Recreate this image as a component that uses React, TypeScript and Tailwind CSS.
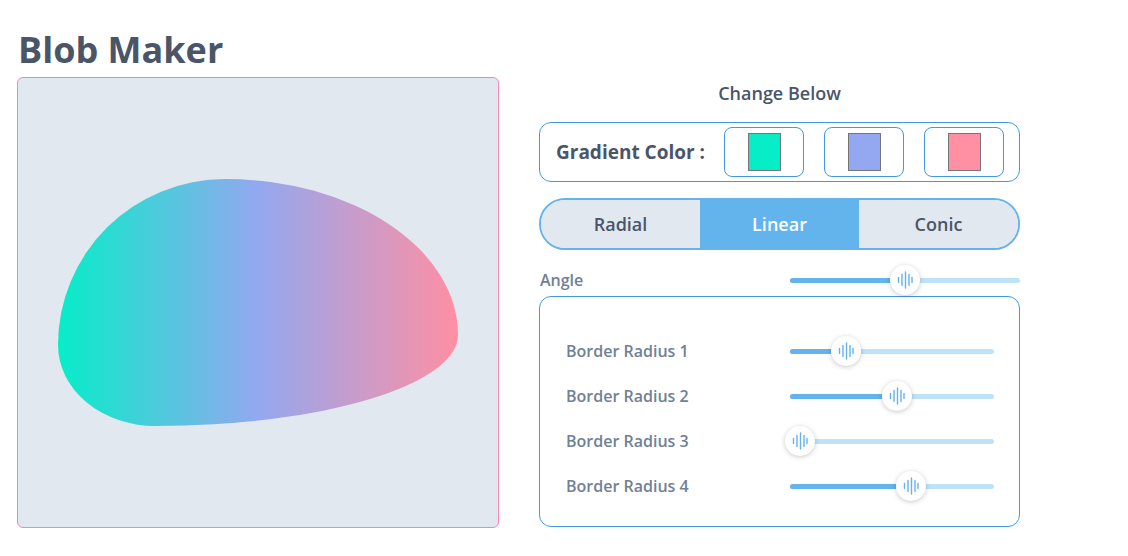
import React from "react";

function Thumb() {
  return (
    <div className="absolute top-1/2 w-[30px] h-[30px] -translate-x-1/2 -translate-y-1/2 rounded-full bg-white shadow-[0_1px_5px_rgba(0,0,0,0.22)] flex items-center justify-center">
      <svg width="16" height="18" viewBox="0 0 16 18">
        <g stroke="#63b3ed" strokeWidth="1.4" strokeLinecap="round">
          <line x1="1.5" y1="6.5" x2="1.5" y2="11.5" />
          <line x1="5" y1="3.5" x2="5" y2="14.5" />
          <line x1="8.5" y1="1" x2="8.5" y2="17" />
          <line x1="12" y1="3.5" x2="12" y2="14.5" />
          <line x1="15" y1="6.5" x2="15" y2="11.5" />
        </g>
      </svg>
    </div>
  );
}

function Slider({ width, pos }: { width: number; pos: number }) {
  return (
    <div className="relative h-[5px] rounded-full bg-[#bee3f8]" style={{ width }}>
      <div className="absolute left-0 top-0 h-full rounded-full bg-[#63b3ed]" style={{ width: pos }} />
      <div className="absolute inset-y-0" style={{ left: pos }}>
        <Thumb />
      </div>
    </div>
  );
}

function Swatch({ color }: { color: string }) {
  return (
    <div className="w-[80px] h-[50px] border border-[#4299e1] rounded-[8px] flex items-center justify-center">
      <div className="w-[33px] h-[38px] border border-[#767676]" style={{ background: color }} />
    </div>
  );
}

export default function App() {
  const rows: [string, number][] = [
    ["Border Radius 1", 56],
    ["Border Radius 2", 107],
    ["Border Radius 3", 10],
    ["Border Radius 4", 121],
  ];
  return (
    <div className="w-[1128px] h-[556px] bg-white font-['Open_Sans',sans-serif] overflow-hidden">
      <h1 className="pl-[18px] pt-[30px] mb-[7px] text-[36px] leading-[40px] font-bold text-[#4a5568]">
        Blob Maker
      </h1>
      <div className="flex pl-[17px] gap-[40px]">
        <div className="w-[482px] h-[451px] bg-[#e2e8f0] border border-[#f687b3] rounded-[6px] flex items-center justify-center">
          <div className="w-[400px] h-[247px] bg-[linear-gradient(to_right,#06edc8,#93a8f0,#ff8fa3)] rounded-[167px_233px_303px_97px/166px_156px_91px_81px]" />
        </div>
        <div className="w-[481px] flex flex-col">
          <div className="h-[32px] leading-[32px] text-center text-[18px] font-semibold text-[#4a5568]">
            Change Below
          </div>
          <div className="mt-[13px] h-[60px] border border-[#4299e1] rounded-[12px] flex items-center pl-[16px] pr-[15px]">
            <span className="text-[19px] font-bold text-[#4a5568]">Gradient Color :</span>
            <div className="ml-auto flex gap-[20px]">
              <Swatch color="#06edc8" />
              <Swatch color="#93a8f0" />
              <Swatch color="#ff8fa3" />
            </div>
          </div>
          <div className="mt-[16px] h-[52px] border-2 border-[#63b3ed] rounded-full overflow-hidden flex text-[18px] font-semibold">
            <div className="flex-1 bg-[#e2e8f0] text-[#4a5568] flex items-center justify-center">Radial</div>
            <div className="flex-1 bg-[#63b3ed] text-white flex items-center justify-center">Linear</div>
            <div className="flex-1 bg-[#e2e8f0] text-[#4a5568] flex items-center justify-center">Conic</div>
          </div>
          <div className="mt-[15px] h-[30px] flex items-center">
            <span className="pl-[1px] w-[251px] text-[16px] font-semibold text-[#718096]">Angle</span>
            <Slider width={230} pos={115} />
          </div>
          <div className="mt-[1px] h-[231px] border border-[#4299e1] rounded-[12px] pt-[31.5px] pl-[26px]">
            {rows.map(([label, pos]) => (
              <div key={label} className="h-[45px] flex items-center">
                <span className="w-[224px] text-[16px] font-semibold text-[#718096]">{label}</span>
                <Slider width={204} pos={pos} />
              </div>
            ))}
          </div>
        </div>
      </div>
    </div>
  );
}
